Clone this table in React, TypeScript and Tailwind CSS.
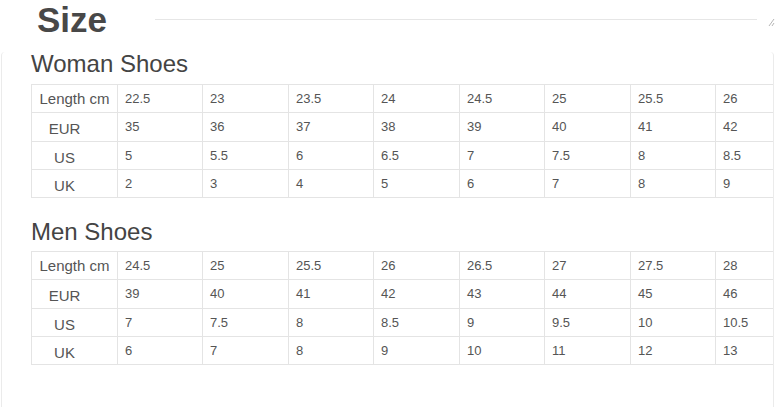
const woman = {
  rows: [
    { label: "Length cm", values: ["22.5", "23", "23.5", "24", "24.5", "25", "25.5", "26"] },
    { label: "EUR", values: ["35", "36", "37", "38", "39", "40", "41", "42"] },
    { label: "US", values: ["5", "5.5", "6", "6.5", "7", "7.5", "8", "8.5"] },
    { label: "UK", values: ["2", "3", "4", "5", "6", "7", "8", "9"] },
  ],
};

const men = {
  rows: [
    { label: "Length cm", values: ["24.5", "25", "25.5", "26", "26.5", "27", "27.5", "28"] },
    { label: "EUR", values: ["39", "40", "41", "42", "43", "44", "45", "46"] },
    { label: "US", values: ["7", "7.5", "8", "8.5", "9", "9.5", "10", "10.5"] },
    { label: "UK", values: ["6", "7", "8", "9", "10", "11", "12", "13"] },
  ],
};

const colWidths = [
  "w-[85px]",
  "w-[86px]",
  "w-[85px]",
  "w-[86px]",
  "w-[85px]",
  "w-[86px]",
  "w-[85px]",
  "flex-1",
];

const rowHeights = ["h-[28px]", "h-[29px]", "h-[28px]", "h-[28px]"];

function SizeTable({ data }: { data: typeof woman }) {
  return (
    <div className="w-[742px] border-l border-t border-[#e4e4e4]">
      {data.rows.map((row, i) => {
        const first = i === 0;
        return (
          <div
            key={row.label}
            className={["flex border-b border-[#e4e4e4]", rowHeights[i]].join(" ")}
          >
            <div
              className={[
                "flex w-[86px] shrink-0 items-center justify-center border-r border-[#e4e4e4] text-[15px] text-[#555]",
                first ? "pt-[2px]" : "pr-[20px] pt-[5px]",
              ].join(" ")}
            >
              {row.label}
            </div>
            {row.values.map((v, j) => (
              <div
                key={j}
                className={[
                  "flex shrink-0 items-center pl-[7px] text-[13px] text-[#555]",
                  colWidths[j],
                  j < 7 ? "border-r border-[#e4e4e4]" : "",
                ].join(" ")}
              >
                {v}
              </div>
            ))}
          </div>
        );
      })}
    </div>
  );
}

export default function App() {
  return (
    <div className="h-[407px] w-[777px] overflow-hidden bg-white font-['Liberation_Sans',Arial,sans-serif]">
      <div className="flex h-[30px] items-start">
        <p className="ml-[37px] mt-[2px] text-[35px] font-bold leading-none text-[#484848]">
          Size
        </p>
        <div className="ml-[48px] mt-[19px] h-px w-[602px] bg-[#e6e6e6]" />
        <svg
          className="ml-[11px] mt-[18px]"
          width="7"
          height="9"
          viewBox="0 0 7 9"
          fill="none"
          stroke="#b5b5b5"
          strokeWidth="1"
        >
          <path d="M1 8 L6 1" />
          <path d="M4 8 L6 5" />
        </svg>
      </div>

      <div className="ml-[1px] h-[368px] w-[773px] rounded-t-[4px] border-l border-r border-[#ebebeb] pl-[29px]">
        <h2 className="mt-[22px] text-[24px] leading-none text-[#444]">
          Woman Shoes
        </h2>
        <div className="mt-[8px]">
          <SizeTable data={woman} />
        </div>

        <h2 className="mt-[22px] text-[24px] leading-none text-[#444]">
          Men Shoes
        </h2>
        <div className="mt-[7px]">
          <SizeTable data={men} />
        </div>
      </div>
    </div>
  );
}
